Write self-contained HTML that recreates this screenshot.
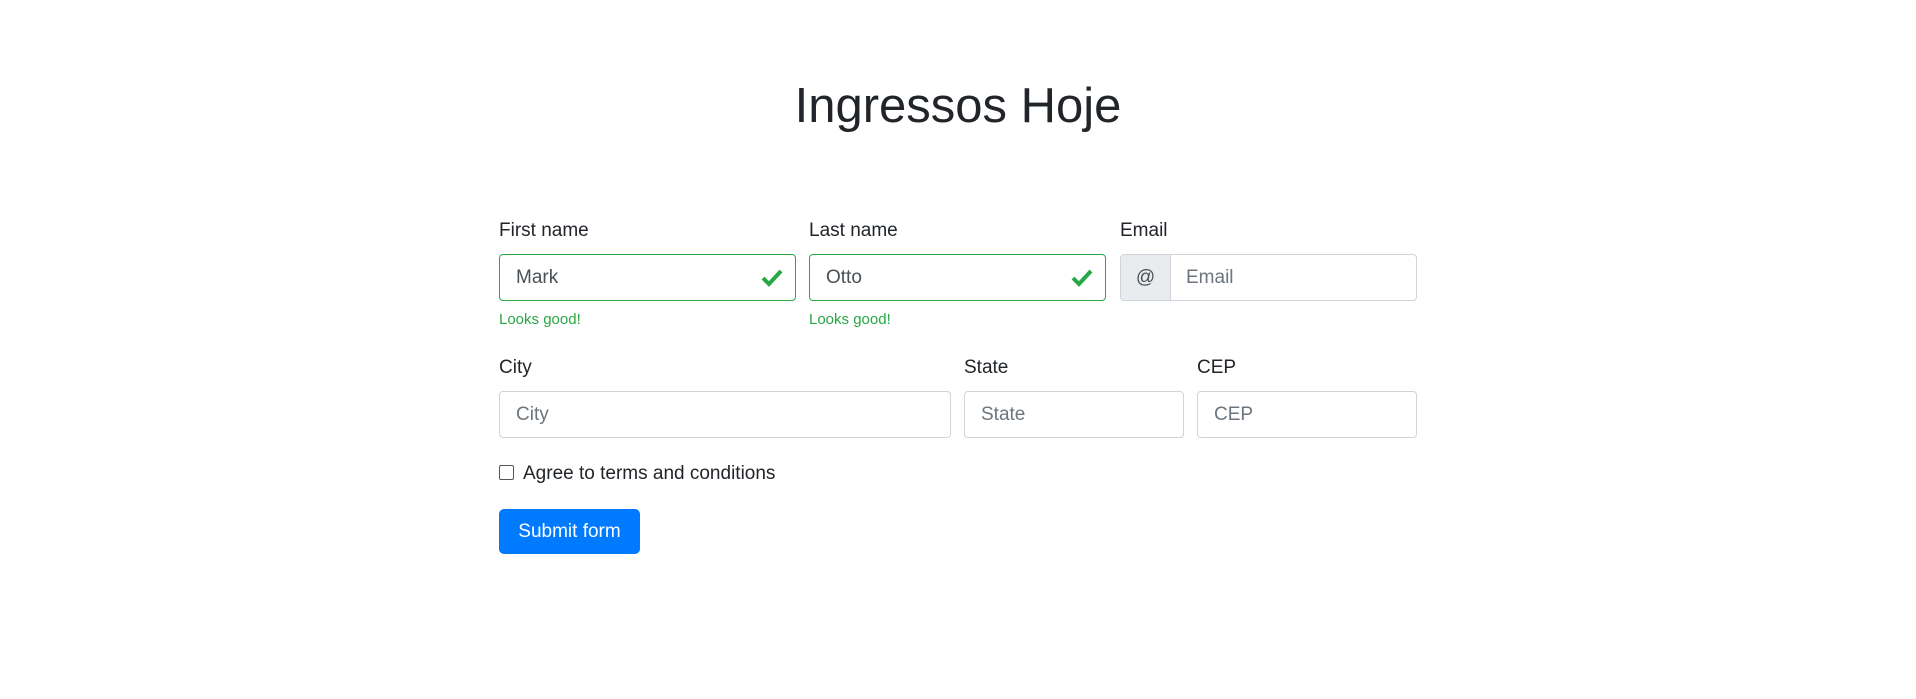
<!DOCTYPE html>
<html><head><meta charset="utf-8"><style>
body{margin:0;width:1916px;height:699px;background:#fff;font-family:"Liberation Sans",sans-serif;color:#212529;position:relative;overflow:hidden}
.a{position:absolute}
h1{position:absolute;left:0;width:1916px;text-align:center;top:78px;margin:0;font-size:49px;font-weight:normal;line-height:56px}
.lbl{font-size:19px;line-height:24px}
.in{box-sizing:border-box;border:1px solid #ced4da;border-radius:4px;height:47px;font-size:19px;line-height:45px;padding-left:16px;color:#6c757d}
.ok{border-color:#28a745;color:#495057}
.fb{font-size:15px;color:#28a745}
</style></head><body>
<h1>Ingressos Hoje</h1>
<div class="a lbl" style="left:499px;top:219px">First name</div>
<div class="a lbl" style="left:809px;top:219px">Last name</div>
<div class="a lbl" style="left:1120px;top:219px">Email</div>
<div class="a in ok" style="left:499px;top:254px;width:297px">Mark<svg class="a" style="right:12px;top:14px" width="22" height="18" viewBox="0 0 22 18"><path d="M2 9l6 6L20 2" stroke="#28a745" stroke-width="4" fill="none"/></svg></div>
<div class="a in ok" style="left:809px;top:254px;width:297px">Otto<svg class="a" style="right:12px;top:14px" width="22" height="18" viewBox="0 0 22 18"><path d="M2 9l6 6L20 2" stroke="#28a745" stroke-width="4" fill="none"/></svg></div>
<div class="a in" style="left:1120px;top:254px;width:297px;padding-left:0;overflow:hidden"><span style="display:inline-block;width:49px;height:45px;background:#e9ecef;border-right:1px solid #ced4da;text-align:center;color:#495057">@</span><span style="padding-left:15px">Email</span></div>
<div class="a fb" style="left:499px;top:311px">Looks good!</div>
<div class="a fb" style="left:809px;top:311px">Looks good!</div>
<div class="a lbl" style="left:499px;top:356px">City</div>
<div class="a lbl" style="left:964px;top:356px">State</div>
<div class="a lbl" style="left:1197px;top:356px">CEP</div>
<div class="a in" style="left:499px;top:391px;width:452px">City</div>
<div class="a in" style="left:964px;top:391px;width:220px">State</div>
<div class="a in" style="left:1197px;top:391px;width:220px">CEP</div>
<div class="a" style="left:499px;top:465px;width:13px;height:13px;border:1px solid #555;border-radius:2px"></div>
<div class="a lbl" style="left:523px;top:462px">Agree to terms and conditions</div>
<div class="a" style="left:499px;top:509px;width:141px;height:45px;background:#007bff;border-radius:5px;color:#fff;font-size:19px;line-height:45px;text-align:center">Submit form</div>
</body></html>
